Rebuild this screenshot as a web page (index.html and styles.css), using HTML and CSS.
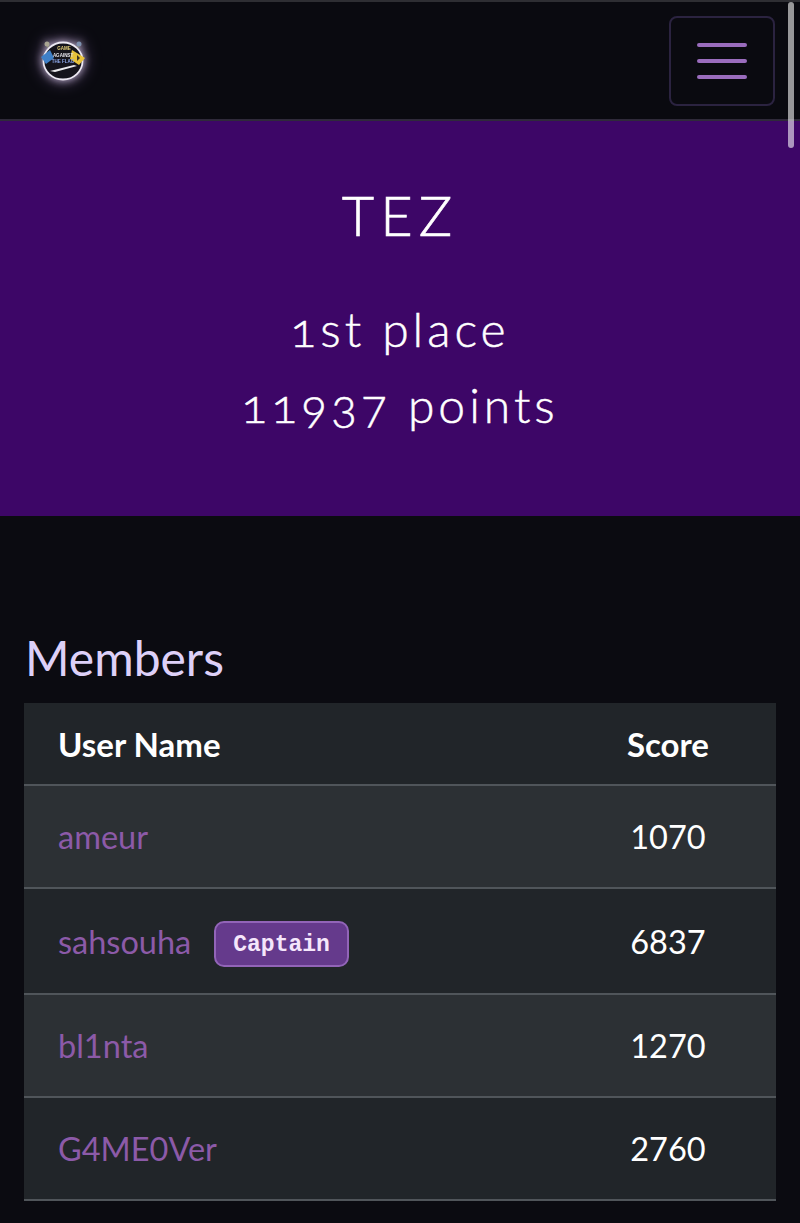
FILE: index.html
```html
<!DOCTYPE html>
<html lang="en">
<head>
    <meta charset="UTF-8">
    <meta name="viewport" content="width=device-width, initial-scale=1.0">
    <title>TEZ</title>
    <link rel="stylesheet" href="styles.css">
</head>
<body>
    <!-- navbar -->
    <nav class="navbar">
        <a class="logo" href="#">
            <svg width="50" height="50" viewBox="0 0 50 50">
                <path d="M9 9l3 5M41 9l-3 5" stroke="#8d8a7c" stroke-width="2"/>
                <circle cx="9" cy="8" r="2.500" fill="#a8a592"/>
                <circle cx="41" cy="8" r="2.500" fill="#7d90ae"/>
                <ellipse cx="25" cy="25" rx="19.500" ry="18.500" fill="#15141c" stroke="#ece8f2" stroke-width="1.800"/>
                <path d="M3 21l9-7 4 8-8 6z" fill="#3f80c8"/>
                <path d="M34 14l13 8-6 7-9-6z" fill="#e8c23a"/>
                <path d="M39 19l3 3-3 3z" fill="#3a3320"/>
                <text class="logo-text" x="26" y="14" fill="#e8d27a">GAME</text>
                <text class="logo-text" x="25" y="20.500" fill="#e4e4ec">AGAINST</text>
                <text class="logo-text" x="25" y="27" fill="#8ea8ea">THE FLAG</text>
                <path d="M12 35l24-6 3 1-22 6z" fill="#ecebee"/>
            </svg>
        </a>
        <button class="toggler" aria-label="menu">
            <span class="bar"></span>
            <span class="bar"></span>
            <span class="bar"></span>
        </button>
    </nav>

    <!-- team header -->
    <header class="jumbotron">
        <h1>TEZ</h1>
        <h2>1st place</h2>
        <h2>11937 points</h2>
    </header>

    <main class="container">
        <h3>Members</h3>
        <table class="members">
            <thead>
                <tr>
                    <th>User Name</th>
                    <th class="score">Score</th>
                </tr>
            </thead>
            <tbody>
                <tr>
                    <td><a href="#">ameur</a></td>
                    <td class="score">1070</td>
                </tr>
                <tr>
                    <td class="captain">
                        <div class="member">
                            <a href="#">sahsouha</a>
                            <span class="badge">Captain</span>
                        </div>
                    </td>
                    <td class="score">6837</td>
                </tr>
                <tr>
                    <td><a href="#">bl1nta</a></td>
                    <td class="score">1270</td>
                </tr>
                <tr>
                    <td><a href="#">G4ME0Ver</a></td>
                    <td class="score">2760</td>
                </tr>
            </tbody>
        </table>
    </main>

    <div class="scroll-thumb"></div>
</body>
</html>
```

FILE: styles.css
```css
html, body {
    height: 1223px;
    overflow: hidden;
}
body {
    margin: 0;
    background-color: #0b0b11;
    color: #fff;
    font-family: 'Lato', 'Liberation Sans', sans-serif;
}
.navbar {
    display: flex;
    justify-content: space-between;
    align-items: center;
    box-sizing: border-box;
    height: 121px;
    padding: 0 25px 0 38px;
    background-color: #0a0a10;
    border-top: 2px solid #2e2e33;
    border-bottom: 2px solid #2f2a3a;
}
.logo {
    display: block;
    width: 50px;
    height: 50px;
}
.logo svg {
    display: block;
    filter: drop-shadow(0 0 4px rgba(235, 220, 250, 0.8)) drop-shadow(0 0 8px rgba(180, 140, 220, 0.4));
}
.logo-text {
    font-family: 'Liberation Sans', sans-serif;
    font-size: 4.500px;
    font-weight: 700;
    text-anchor: middle;
}
.toggler {
    display: flex;
    flex-direction: column;
    align-items: center;
    justify-content: center;
    gap: 12px;
    box-sizing: border-box;
    width: 106px;
    height: 90px;
    padding: 0;
    background: transparent;
    border: 2px solid #2b2340;
    border-radius: 8px;
}
.bar {
    display: block;
    width: 50px;
    height: 4px;
    border-radius: 2px;
    background-color: #9a6cbd;
}
.jumbotron {
    box-sizing: border-box;
    height: 395px;
    padding-top: 58px;
    background-color: #3d0667;
    text-align: center;
}
.jumbotron h1 {
    margin: 0 0 40px;
    font-size: 56px;
    font-weight: 300;
    line-height: 72px;
    letter-spacing: 6px;
    -webkit-text-stroke: 0.600px #fff;
}
.jumbotron h2 {
    margin: 0;
    font-size: 48px;
    font-weight: 300;
    line-height: 76px;
    letter-spacing: 4px;
    font-feature-settings: "onum";
    -webkit-text-stroke: 0.500px #fff;
}
.container {
    padding: 116px 24px 0;
}
.container h3 {
    margin: 0 0 19px;
    padding-left: 1px;
    font-size: 48px;
    font-weight: 400;
    line-height: 52px;
    color: #ddd0f8;
}
.members {
    width: 100%;
    border-collapse: collapse;
    background-color: #212529;
    font-size: 32.500px;
}
.members th {
    height: 81px;
    padding: 0 34px;
    font-size: 33px;
    font-weight: 700;
    text-align: left;
    border-bottom: 2px solid #50555a;
}
.members td {
    padding: 0 34px;
    height: 101px;
    border-bottom: 2px solid #50555a;
}
.members td.captain {
    height: 104px;
}
.members tbody tr:nth-child(odd) {
    background-color: #2c3034;
}
.members .score {
    width: 82px;
    padding: 0 67px 0 0;
    text-align: center;
}
.members a {
    color: #8c5aa8;
    text-decoration: none;
}
.member {
    display: flex;
    align-items: center;
}
.badge {
    margin: 5px 0 0 23px;
    padding: 9px 17px 7px;
    font-family: 'Liberation Mono', 'DejaVu Sans Mono', monospace;
    font-size: 23px;
    font-weight: 700;
    line-height: 26px;
    color: #f5e6fb;
    background-color: #653a8c;
    border: 2px solid #9264b8;
    border-radius: 10px;
}
.scroll-thumb {
    position: absolute;
    top: 2px;
    left: 788px;
    width: 6px;
    height: 146px;
    border-radius: 3px;
    background-color: rgba(255, 255, 255, 0.58);
}
```
